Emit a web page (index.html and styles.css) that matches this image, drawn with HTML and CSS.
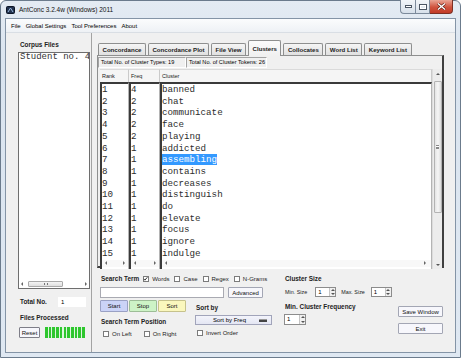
FILE: index.html
```html
<!DOCTYPE html>
<html>
<head>
	<title>AntConc 3.2.4w (Windows) 2011</title>
	<link rel="stylesheet" href="styles.css">
</head>
<body>
<div class="window">
	<div class="titlebar">
		<svg class="app-icon" width="9" height="8" viewBox="0 0 9 8">
			<rect x="0.5" y="0.5" width="8" height="7" rx="1" fill="#22324e" stroke="#0d1526"/>
			<path d="M2 6 L4.5 2 L7 6" fill="none" stroke="#9dbbe0" stroke-width="1"/>
		</svg>
		<span class="title">AntConc 3.2.4w (Windows) 2011</span>
		<div class="caption">
			<span class="cap cap-min"><svg width="7" height="3" viewBox="0 0 7 3"><rect x="0.5" y="0.5" width="6" height="2" fill="#fff" stroke="#4a5563"/></svg></span>
			<span class="cap cap-max"><svg width="8" height="6" viewBox="0 0 8 6"><rect x="0.5" y="0.5" width="7" height="5" fill="none" stroke="#4a5563"/><rect x="1.5" y="1.5" width="5" height="3" fill="none" stroke="#fff"/></svg></span>
			<span class="cap cap-close"><svg width="9" height="7" viewBox="0 0 9 7"><path d="M1 0.5 L8 6.5 M8 0.5 L1 6.5" stroke="#5a1a10" stroke-width="2.6"/><path d="M1 0.5 L8 6.5 M8 0.5 L1 6.5" stroke="#fff" stroke-width="1.4"/></svg></span>
		</div>
	</div>

	<div class="client">
		<div class="menubar">
			<span>File</span>
			<span>Global Settings</span>
			<span>Tool Preferences</span>
			<span>About</span>
		</div>

		<div class="main">
			<!-- corpus side -->
			<div class="corpus">
				<div class="label">Corpus Files</div>
				<div class="listbox">
					<div class="list-text">Student no. 4</div>
					<div class="list-scroll">
						<span class="arr arr-left"></span>
						<span class="list-thumb"><span class="grip"></span></span>
						<span class="arr arr-right"></span>
					</div>
				</div>
				<div class="total-row">
					<span class="label">Total No.</span>
					<span class="field">1</span>
				</div>
				<div class="label processed">Files Processed</div>
				<div class="reset-row">
					<button class="btn reset">Reset</button>
					<div class="progress"></div>
				</div>
			</div>

			<div class="splitter"></div>

			<!-- tool side -->
			<div class="workspace">
				<div class="tabs">
					<div class="tab">Concordance</div>
					<div class="tab">Concordance Plot</div>
					<div class="tab">File View</div>
					<div class="tab active">Clusters</div>
					<div class="tab">Collocates</div>
					<div class="tab">Word List</div>
					<div class="tab">Keyword List</div>
				</div>

				<div class="tabpanel">
					<div class="infobar">
						<span class="info types">Total No. of Cluster Types: 19</span>
						<span class="info tokens">Total No. of Cluster Tokens: 26</span>
					</div>

					<div class="results">
						<div class="col col-rank">
							<div class="col-head">Rank</div>
							<div class="col-list">
								<div class="rows">
									<div>1</div><div>2</div><div>3</div><div>4</div><div>5</div>
									<div>6</div><div>7</div><div>8</div><div>9</div><div>10</div>
									<div>11</div><div>12</div><div>13</div><div>14</div><div>15</div>
								</div>
								<div class="hbar"><span class="arr arr-left"></span><span class="arr arr-right"></span></div>
							</div>
						</div>
						<div class="col col-freq">
							<div class="col-head">Freq</div>
							<div class="col-list">
								<div class="rows">
									<div>4</div><div>2</div><div>2</div><div>2</div><div>2</div>
									<div>1</div><div>1</div><div>1</div><div>1</div><div>1</div>
									<div>1</div><div>1</div><div>1</div><div>1</div><div>1</div>
								</div>
								<div class="hbar"><span class="arr arr-left"></span><span class="arr arr-right"></span></div>
							</div>
						</div>
						<div class="col col-cluster">
							<div class="col-head">Cluster</div>
							<div class="col-list">
								<div class="rows">
									<div>banned</div>
									<div>chat</div>
									<div>communicate</div>
									<div>face</div>
									<div>playing</div>
									<div>addicted</div>
									<div><span class="selected">assembling</span></div>
									<div>contains</div>
									<div>decreases</div>
									<div>distinguish</div>
									<div>do</div>
									<div>elevate</div>
									<div>focus</div>
									<div>ignore</div>
									<div>indulge</div>
								</div>
								<div class="hbar"><span class="arr arr-left"></span><span class="arr arr-right"></span></div>
							</div>
						</div>
						<div class="vscroll">
							<span class="arr arr-up"></span>
							<span class="vthumb"><span class="grip"></span></span>
							<span class="arr arr-down"></span>
						</div>
					</div>
				</div>

				<div class="controls">
					<div class="search">
						<div class="st-row">
							<span class="label">Search Term</span>
							<span class="check first"><span class="box"><svg width="6" height="6" viewBox="0 0 6 6"><path d="M0.8 2.8 L2.3 4.4 L5.2 0.9" fill="none" stroke="#222" stroke-width="1.1"/></svg></span>Words</span>
							<span class="check"><span class="box"></span>Case</span>
							<span class="check"><span class="box"></span>Regex</span>
							<span class="check"><span class="box"></span>N-Grams</span>
						</div>
						<div class="query-row">
							<span class="query"></span>
							<button class="btn advanced">Advanced</button>
						</div>
						<div class="lower">
							<div class="lower-left">
								<div class="run-row">
									<button class="btn start">Start</button>
									<button class="btn stop">Stop</button>
									<button class="btn sort">Sort</button>
								</div>
								<div class="label position">Search Term Position</div>
								<div class="pos-row">
									<span class="check first"><span class="box"></span>On Left</span>
									<span class="check right"><span class="box"></span>On Right</span>
								</div>
							</div>
							<div class="lower-right">
								<div class="label sortby">Sort by</div>
								<div class="dropdown"><span class="dd-text">Sort by Freq</span><span class="dd-bar"></span></div>
								<span class="check first invert"><span class="box"></span>Invert Order</span>
							</div>
						</div>
					</div>

					<div class="cluster">
						<div class="label">Cluster Size</div>
						<div class="size-row">
							<span class="small">Min. Size</span>
							<span class="spinner min"><span class="spin-val">1</span><span class="spin-btns"><span class="arr arr-up"></span><span class="arr arr-down"></span></span></span>
							<span class="small max-label">Max. Size</span>
							<span class="spinner max"><span class="spin-val">1</span><span class="spin-btns"><span class="arr arr-up"></span><span class="arr arr-down"></span></span></span>
						</div>
						<div class="label freq-label">Min. Cluster Frequency</div>
						<span class="spinner freq"><span class="spin-val">1</span><span class="spin-btns"><span class="arr arr-up"></span><span class="arr arr-down"></span></span></span>
					</div>

					<div class="actions">
						<button class="btn save">Save Window</button>
						<button class="btn exit">Exit</button>
					</div>
				</div>
			</div>
		</div>
	</div>
</div>
</body>
</html>
```

FILE: styles.css
```css
* {
	box-sizing: border-box;
}
body {
	margin: 0;
	background: #fff;
	font-family: "Liberation Sans", Arial, sans-serif;
	font-size: 6px;
	color: #000;
}

/* window frame */
.window {
	width: 461px;
	height: 358px;
	border: 1px solid #6b7b8c;
	border-radius: 6px 6px 0 0;
	background: linear-gradient(#e4ebf3, #dae4ef 60px, #dfe8f2);
	padding: 0 4px 4px;
	display: flex;
	flex-direction: column;
}
.titlebar {
	height: 17px;
	display: flex;
	align-items: center;
}
.app-icon {
	margin-left: 1px;
	margin-right: 4px;
}
.title {
	font-size: 6.5px;
	color: #111;
}
.caption {
	margin-left: auto;
	margin-right: 3px;
	align-self: flex-start;
	margin-top: -1px;
	display: flex;
}
.cap {
	height: 14px;
	display: flex;
	align-items: center;
	justify-content: center;
	border: 1px solid #7c8a9b;
	border-top: none;
	background: linear-gradient(#f1f5f9, #d7e0ea);
}
.cap-min {
	width: 15px;
	border-radius: 0 0 0 4px;
	border-right: none;
}
.cap-max {
	width: 15px;
}
.cap-close {
	width: 23px;
	border-color: #7d3024;
	border-radius: 0 0 4px 0;
	border-left: none;
	background: linear-gradient(#e9a595, #d0533e 55%, #c23b27);
}

.client {
	flex: 1;
	border: 1px solid #8494a6;
	background: #f0f0f0;
	display: flex;
	flex-direction: column;
}
.menubar {
	height: 14px;
	padding-left: 5px;
	display: flex;
	align-items: center;
	gap: 5px;
	background: linear-gradient(#fbfcfd, #eef1f5);
	border-bottom: 1px solid #d9dee4;
}
.main {
	flex: 1;
	display: flex;
}

.label {
	font-weight: bold;
	font-size: 6.4px;
	line-height: 8px;
	color: #222;
}

/* corpus files */
.corpus {
	width: 85px;
	padding: 8px 0 0 12px;
	display: flex;
	flex-direction: column;
}
.corpus .label {
	margin-left: 2px;
}
.listbox {
	margin-top: 3px;
	width: 72px;
	height: 237px;
	border: 1px solid #6e6e6e;
	background: #fff;
	display: flex;
	flex-direction: column;
}
.list-text {
	flex: 1;
	overflow: hidden;
	white-space: nowrap;
	font-family: "Liberation Mono", "Courier New", monospace;
	font-size: 9px;
	line-height: 8px;
	padding-left: 1px;
	color: #333;
}
.list-scroll {
	height: 7px;
	margin-bottom: 1px;
	display: flex;
	align-items: center;
	padding: 0 2px;
}
.list-thumb {
	width: 35px;
	height: 6px;
	margin-left: 5px;
	margin-right: auto;
	border: 1px solid #a9a9a9;
	border-radius: 1px;
	background: linear-gradient(#f4f4f4, #dedede);
	display: flex;
	align-items: center;
	justify-content: center;
}
.list-thumb .grip {
	width: 4px;
	height: 2px;
	border-left: 1px solid #777;
	border-right: 1px solid #777;
}

.arr {
	width: 0;
	height: 0;
	display: block;
}
.arr-left {
	border-top: 2px solid transparent;
	border-bottom: 2px solid transparent;
	border-right: 2px solid #666;
}
.arr-right {
	border-top: 2px solid transparent;
	border-bottom: 2px solid transparent;
	border-left: 2px solid #666;
}
.arr-up {
	border-left: 2px solid transparent;
	border-right: 2px solid transparent;
	border-bottom: 2px solid #555;
}
.arr-down {
	border-left: 2px solid transparent;
	border-right: 2px solid transparent;
	border-top: 2px solid #555;
}

.total-row {
	margin-top: 8px;
	height: 10px;
	display: flex;
	align-items: center;
}
.field {
	margin-left: auto;
	margin-right: 5px;
	width: 28px;
	height: 10px;
	background: #fff;
	padding-left: 3px;
	line-height: 10px;
}
.processed {
	margin-top: 7px;
}
.reset-row {
	margin-top: 5px;
	height: 11px;
	display: flex;
}
.progress {
	margin-left: 5px;
	width: 40px;
	height: 11px;
	background: repeating-linear-gradient(90deg, #2ec62e 0 2.6px, #dff5df 2.6px 3.7px);
}

.btn {
	font-family: inherit;
	font-size: 6px;
	color: #111;
	height: 11px;
	padding: 0;
	border: 1px solid #a3a6b4;
	border-radius: 1px;
	background: #f7f7fc;
	display: flex;
	align-items: center;
	justify-content: center;
}
.reset {
	margin-left: 1px;
	width: 21px;
	border-color: #7e7e88;
}

.splitter {
	width: 5px;
	border-left: 1px solid #a3a3a3;
}

/* tabs and results */
.workspace {
	flex: 1;
	padding: 7px 11px 0 1px;
	display: flex;
	flex-direction: column;
}
.tabs {
	height: 15px;
	padding-left: 1px;
	display: flex;
	align-items: flex-end;
	gap: 2px;
}
.tab {
	height: 12px;
	padding: 0 3.5px;
	border: 1px solid #8e8f8f;
	border-bottom: none;
	border-radius: 2px 2px 0 0;
	background: linear-gradient(#f5f5f5, #e0e0e0);
	font-weight: bold;
	font-size: 6.1px;
	color: #222;
	display: flex;
	align-items: center;
}
.tab.active {
	height: 16px;
	margin-bottom: -1px;
	background: linear-gradient(#fbfbfb, #f0f0f0);
	position: relative;
	z-index: 1;
}
.tabpanel {
	width: 347px;
	height: 213px;
	border: 1px solid #8e8f8f;
	border-right: 2px solid #404040;
	border-bottom: 2px solid #404040;
	display: flex;
	flex-direction: column;
}
.infobar {
	margin: 1px 0;
	height: 11px;
	display: flex;
}
.info {
	font-size: 5.6px;
	line-height: 9px;
	padding-left: 2px;
	border: 1px solid;
	border-color: #a3a3a3 #fff #fff #a3a3a3;
	white-space: nowrap;
}
.types {
	width: 88px;
}
.tokens {
	width: 81px;
}
.results {
	flex: 1;
	padding-left: 2px;
	display: flex;
}
.col {
	display: flex;
	flex-direction: column;
}
.col-rank {
	width: 29px;
}
.col-freq {
	width: 31px;
}
.col-cluster {
	width: 272px;
}
.col-head {
	height: 13px;
	border-top: 1px solid #dadada;
	border-right: 1px solid #cacaca;
	background: #f5f5f5;
	font-size: 5.5px;
	padding-left: 2px;
	display: flex;
	align-items: center;
	color: #222;
}
.col-list {
	flex: 1;
	border-top: 2px solid #3a3a3a;
	border-left: 2px solid #3a3a3a;
	border-right: 1px solid #b4b4b4;
	background: #fff;
	display: flex;
	flex-direction: column;
}
.rows {
	flex: 1;
	overflow: hidden;
	font-family: "Liberation Mono", "Courier New", monospace;
	font-size: 9.2px;
	line-height: 11.7px;
	color: #2c2c2c;
	white-space: nowrap;
}
.selected {
	display: inline-block;
	height: 11px;
	line-height: 11px;
	vertical-align: top;
	background: #3399ff;
	color: #fff;
}
.hbar {
	height: 7px;
	margin-bottom: 2px;
	padding: 0 3px;
	background: #f8f8f8;
	display: flex;
	align-items: center;
	justify-content: space-between;
}
.col-cluster .hbar {
	padding: 0 5px 0 3px;
}
.vscroll {
	width: 10px;
	background: #ececec;
	border-left: 1px solid #dcdcdc;
	display: flex;
	flex-direction: column;
	align-items: center;
	padding: 4px 0 3px;
}
.vthumb {
	margin-top: 6px;
	width: 8px;
	height: 132px;
	border: 1px solid #b3b3b3;
	border-radius: 1px;
	background: linear-gradient(90deg, #e4e4e4, #f6f6f6, #dcdcdc);
	display: flex;
	align-items: center;
	justify-content: center;
	margin-bottom: auto;
}
.vthumb .grip {
	width: 3px;
	height: 4px;
	border-top: 1px solid #888;
	border-bottom: 1px solid #888;
	box-shadow: inset 0 1px 0 #fff, inset 0 -1px 0 #888;
}

/* bottom controls */
.controls {
	flex: 1;
	padding: 7px 0 0 4px;
	display: flex;
}
.search {
	width: 180px;
	display: flex;
	flex-direction: column;
}
.st-row {
	height: 8px;
	display: flex;
	align-items: center;
}
.check {
	display: flex;
	align-items: center;
	gap: 3px;
	margin-left: 5px;
	white-space: nowrap;
	color: #222;
}
.check.first {
	margin-left: 4px;
}
.box {
	width: 6px;
	height: 6px;
	border: 1px solid #7b7b7b;
	background: #fff;
	display: flex;
}
.box svg {
	margin: -1px 0 0 -1px;
}
.query-row {
	margin-top: 4px;
	height: 11px;
	display: flex;
}
.query {
	margin-left: -1px;
	width: 124px;
	border: 1px solid #a9aab2;
	background: #fff;
}
.advanced {
	margin-left: 4px;
	width: 35px;
}
.lower {
	display: flex;
}
.lower-left {
	width: 94px;
	display: flex;
	flex-direction: column;
}
.run-row {
	margin-top: 2px;
	height: 12px;
	display: flex;
	gap: 1px;
	margin-left: -1px;
}
.run-row .btn {
	height: 12px;
	width: 28px;
}
.start {
	background: #cbd3f7;
	border-color: #9aa1c4;
}
.stop {
	background: #cdf3c6;
	border-color: #9dbd97;
}
.sort {
	background: #faf7bd;
	border-color: #c6c28c;
}
.position {
	margin-top: 6px;
}
.pos-row {
	margin-top: 4px;
	height: 7px;
	display: flex;
}
.pos-row .first {
	margin-left: 2px;
}
.pos-row .right {
	margin-left: 12px;
}
.lower-right {
	display: flex;
	flex-direction: column;
}
.sortby {
	margin-top: 6px;
	margin-left: 1px;
}
.dropdown {
	margin-top: 3px;
	width: 77px;
	height: 10px;
	border: 1px solid #a1a4ba;
	background: linear-gradient(#f3f4fb, #e4e6f3);
	display: flex;
	align-items: center;
}
.dd-text {
	flex: 1;
	text-align: center;
	padding-left: 4px;
}
.dd-bar {
	width: 8px;
	height: 3px;
	margin-right: 4px;
	background: #444;
	border-top: 1px solid #999;
}
.invert {
	margin-top: 4px;
	height: 7px;
}
.lower-right .first {
	margin-left: 2px;
}

.cluster {
	flex: 1;
	margin-left: 4px;
	display: flex;
	flex-direction: column;
}
.small {
	font-size: 5.4px;
	color: #222;
}
.size-row {
	margin-top: 4px;
	height: 10px;
	display: flex;
	align-items: center;
}
.spinner {
	width: 21px;
	height: 10px;
	border: 1px solid #8c8c8c;
	background: #fff;
	display: flex;
}
.size-row .min {
	margin-left: 8px;
}
.max-label {
	margin-left: 5px;
}
.size-row .max {
	margin-left: 6px;
}
.spin-val {
	flex: 1;
	padding-left: 2px;
	line-height: 8px;
}
.spin-btns {
	width: 6px;
	border-left: 1px solid #c4c4c4;
	background: #f0f0f0;
	display: flex;
	flex-direction: column;
	align-items: center;
	justify-content: space-around;
}
.freq-label {
	margin-top: 6px;
}
.freq {
	margin-top: 3px;
	margin-left: -1px;
	width: 22px;
	height: 11px;
}

.actions {
	width: 45px;
	margin-right: 1px;
	padding-top: 31px;
	display: flex;
	flex-direction: column;
}
.save {
	height: 11px;
}
.exit {
	margin-top: 6px;
	height: 11px;
}
```
